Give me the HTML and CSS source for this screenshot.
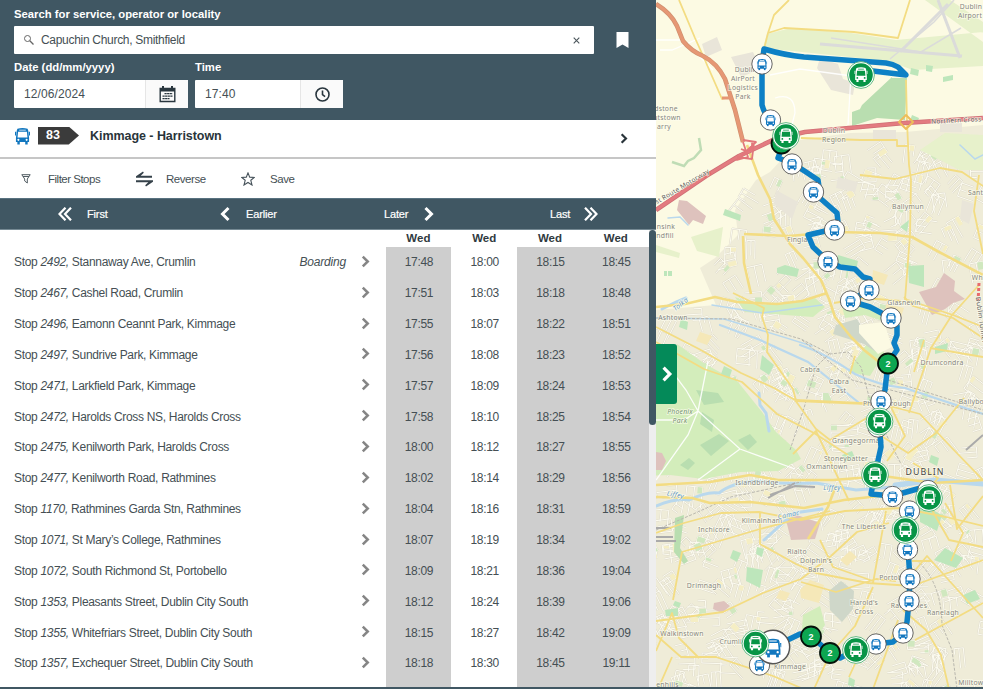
FILE: index.html
```html
<!DOCTYPE html>
<html lang="en">
<head>
<meta charset="utf-8">
<title>Kimmage - Harristown timetable</title>
<link rel="stylesheet" href="styles.css">
</head>
<body>
<svg width="0" height="0" class="defs">
  <symbol id="bus" viewBox="0 0 16 18">
    <path fill="currentColor" fill-rule="evenodd" d="M2.600 1.300Q8-.5 13.400 1.300l.7 1.700.9 8v4.500h-1.500V18h-2.600v-2.500H5.100V18H2.500v-2.500H1V11l.9-8zM4.500 2.200v.9h7v-.9zM3.300 4.500l-.6 6h10.600l-.6-6zM3.600 12a1.100 1.100 0 100 2.200 1.100 1.100 0 000-2.200zm8.800 0a1.100 1.100 0 100 2.200 1.100 1.100 0 000-2.200z"/>
    <path fill="currentColor" d="M0 4.500h1.400L1 8.500H0zM14.600 4.500H16v4h-1z"/>
  </symbol>
  <symbol id="stop" viewBox="-11 -11 22 22"><circle r="10.200" fill="#fff" stroke="#555" stroke-width=".9"/><use href="#bus" x="-5.200" y="-5.500" width="10.400" height="12" color="#1277bf"/></symbol>
  <symbol id="vehicle" viewBox="-15 -15 30 30"><circle r="13.400" fill="#fff" stroke="#3fa968" stroke-width=".8"/><circle r="11.800" fill="#079546"/><use href="#bus" x="-6.700" y="-8" width="13.400" height="15" color="#fff"/></symbol>
  <symbol id="cluster" viewBox="-12 -12 24 24"><circle r="10" fill="#0da651" stroke="#05120a" stroke-width="1.800"/></symbol>
  <symbol id="chev" viewBox="0 0 10 14"><path d="M2 1.500L7.500 7 2 12.500" fill="none" stroke="currentColor" stroke-width="2.800"/></symbol>
</svg>
<main class="app">
  <section class="panel">
    <header class="search">
      <label>Search for service, operator or locality</label>
      <div class="search-row">
        <div class="field query">
          <svg width="12" height="12" viewBox="0 0 12 12" fill="none" stroke="#666"><circle cx="4.500" cy="4.500" r="3"/><path d="M6.800 6.800l3.700 3.700" stroke-width="1.300"/></svg>
          <span>Capuchin Church, Smithfield</span>
          <svg width="7" height="7" viewBox="0 0 7 7" stroke="#4b565c" stroke-width="1.100"><path d="M.7.7l5.600 5.600M6.300.7L.7 6.300"/></svg>
        </div>
        <svg width="13" height="16" viewBox="0 0 13 16"><path fill="#fff" d="M.5 0h12v16l-6-3.400L.5 16z"/></svg>
      </div>
      <div class="when">
        <div class="date"><label>Date (dd/mm/yyyy)</label>
          <div class="field"><span>12/06/2024</span><i><svg width="17" height="17" viewBox="0 0 17 17"><path fill="none" stroke="#29363e" stroke-width="1.400" d="M1.200 2.500h14.600v13H1.200z"/><path fill="#29363e" d="M1 2h15v3.500H1zM3 0h2v3H3zM12 0h2v3h-2z"/><path stroke="#29363e" stroke-width="1.300" stroke-dasharray="2.200 .4" d="M5.500 7.700h8M3.500 10.200h10M3.500 12.700h7"/></svg></i></div></div>
        <div class="time"><label>Time</label>
          <div class="field"><span>17:40</span><i><svg width="15" height="15" viewBox="0 0 15 15" fill="none" stroke="#29363e" stroke-width="1.600"><circle cx="7.500" cy="7.500" r="6.500"/><path d="M7.500 3.500v4.200l2.600 2"/></svg></i></div></div>
      </div>
    </header>
    <div class="route">
      <svg class="route-bus" width="15" height="18"><use href="#bus" width="15" height="18"/></svg>
      <b class="badge">83</b><b class="name">Kimmage - Harristown</b>
      <svg class="go" width="8" height="11"><use href="#chev" width="8" height="11"/></svg>
    </div>
    <div class="tools">
      <svg width="10" height="10" viewBox="0 0 10 10" fill="none" stroke="#525d63" stroke-width="1"><path d="M.8.700h8.400L6.300 5v4L3.700 7V5zM2 2.500h6"/></svg><span>Filter Stops</span>
      <svg width="17" height="16" viewBox="0 0 17 16" fill="#35414a"><path d="M0 6.700V5.300L7 .5l.8 1.300L4.700 4.700H16v2zM17 9.300v1.400l-7 4.800-.8-1.300 3.100-2.900H0v-2z"/></svg><span>Reverse</span>
      <svg width="14" height="14" viewBox="0 0 14 14" fill="none" stroke="#46525a" stroke-width="1.100"><path d="M7 .9l1.700 4.200 4.600.3-3.500 2.900 1.200 4.700L7 10.500 3 13l1.200-4.700L.7 5.400l4.600-.3z"/></svg><span>Save</span>
    </div>
    <nav class="pager">
      <svg width="14" height="14" viewBox="0 0 14 14" class="double"><path d="M7.500.7L1.500 7l6 6.300M13 .7L7 7l6 6.300"/></svg><span>First</span>
      <svg width="10" height="16" viewBox="0 0 10 14" class="single"><path d="M8.500 1L2.500 7l6 6"/></svg><span>Earlier</span>
      <span>Later</span><svg width="10" height="16" viewBox="0 0 10 14" class="single"><path d="M1.500 1l6 6-6 6"/></svg>
      <span>Last</span><svg width="14" height="14" viewBox="0 0 14 14" class="double"><path d="M1 .7L7 7l-6 6.300M6.500.7l6 6.300-6 6.300"/></svg>
    </nav>
    <div class="timetable">
      <div class="table">
        <div class="days"><b>Wed</b><b>Wed</b><b>Wed</b><b>Wed</b></div>
        <div class="rows" id="rows"></div>
      </div>
      <div class="scroll"><div class="thumb"></div></div>
    </div>
  </section>
  <section class="map">
    <svg width="327" height="689" viewBox="656 0 327 689">
      <rect x="656" width="327" height="689" fill="#efecd8"/>
      <path fill="#fcfae3" d="M656 0H983V125L905 132 850 133 800 140 770 172 756 180 735 210 738 235 715 258 700 268 716 305 656 310z"/>
      <g id="streets"></g>
      <g fill="#e7f1cb">
        <path d="M767 34l24-6 60 5 45 7 87-8v34l-70 4-25-9-125-13zM895 0h30l58 42V22L950 0z"/>
        <path d="M691 237l32-10-4 30-22-6zM656 245l24 8-1 5-23-6zM920 150l25-17 38 2v35h-24l-15-8z"/>
      </g>
      <g fill="#d3edbb">
        <path d="M677 344l28 20 33 18 24 30 14 20 20 18 5 9-23 12-38 1-36 7-34-4-24 1v-83l21-5z"/>
        <path d="M735 297l22 8 40-3 18-4 10 9-12 10-28-2-40-3zM840 299l20 4 21 9 4 10-20-7-20 3z"/>
        <path d="M803 615l17-9 5 19-6 8-17-4zM848 372l20-30 12-2 4 13-14 23z"/>
      </g>
      <g fill="#b9deb0">
        <path d="M892 78h15l-2 42-28-2-25 8v-14l14-5 24-2zM862 105l30-28 4 39-40 1z"/>
        <path d="M696 390l22 3 6 9-20 3zM702 412l12 8-2 12-12-8zM700 445l19-11 10 7-18 15zM738 440l12-6 7 8-9 8zM680 465l9-7 6 5-7 7z"/>
        <path d="M675 518l9-3-4 33 8 13-4 3-10-12z"/>
      </g>
      <path fill="none" stroke="#bfdcb5" stroke-width="2.500" d="M699 138l2 12-7 8-6 3-4 5-12-4"/>
      <g fill="#bde6bb">
        <path d="M911 68l8 2-1 6-8-2zM926 65l7 1-1 6-6-1zM943 77l10-2v5l-10 2zM912 115l7 3-2 6-7-3zM725 209l16 6-1 6-17-6zM777 268l8-3 14 4-2 8-20-4zM838 255l20 6-2 9-20-7zM908 266l16-1v22l-15-4zM900 227l9-7-2 12zM664 271h3v5h-3zM668 271h4v5h-4zM681 319l7 3-1 8-8-3zM724 366l8 4-3 9-8-5zM762 355l12 10-5 10-9-6zM747 567l16 3-3 18-14-7zM733 550l8 3-4 9-7-4zM757 547l7 2-2 8-6-3zM665 610l13-2v8h-12zM675 601l6 2-2 5-6-3zM849 677l6 3-1 7-6-2zM920 503l22 12-5 16-17-9zM934 560l11-12 18 10-7 10zM935 347l13-4-1 8-12 3zM842 455l10-4 3 7-10 4zM931 455l8 3-2 8-8-4zM963 595l12-5 5 9-13 5z"/>
      </g>
      <g fill="#f5e8b8"><path d="M800 590l10-10 14 5-5 18-18-5zM886 304l18 4-3 9-16-3zM873 270l15 5-4 10-12-4zM780 590l10 3-4 8-10-3zM840 560l10-9 7 6-10 9zM930 300l14 4-4 10-12-4zM700 332l12 4-5 9-11-4z"/></g>
      <g fill="#dec2bd"><path d="M679 200l8 1 19 15-3 8-10-4-4 5-12-15zM919 292l17-5 8-14 11 8-1 10 11 8-12 4-8 6-13 6zM786 520l8-6 26 9-5 16-24 1zM656 452l6 1 4 8-4 9h-6zM714 603l10-2 6 5-8 7-9-4z"/></g>
      <g fill="#cfd7c9"><path d="M829 591l12-10 13 10-1 18-11 13-12-12zM836 325l21-6 11 18 8 15-12-8-31-10z"/></g>
      <path fill="#fcfae3" d="M859 325l25-3 8 25-14 7-19-21z"/>
      <g fill="#e9e5d9"><path d="M702 44l15-7 5 13-16 7zM731 57l22-5 8 17-20 8zM820 58l18 6 5 15 12 4-2 12-22-5-14-22zM873 130h23v10h-23zM940 123h22v9h-22zM776 190l22 12-6 17-18-15zM838 177l20 5-3 10-19-4zM962 200l12 4-5 20-9-5z"/></g>
      <g fill="none" stroke="#dbdbda" stroke-width="3"><path d="M820 44l142 12M938 0l22 58M900 52l48-48" /><path stroke-width="1.500" d="M831 38l90 14 40-24M890 59l44-37 20-22"/></g>

      <g fill="none" stroke="#b9d8ed" stroke-linecap="round">
        <path stroke-width="3" d="M656 506q20-8 33-6 18-9 30-7 12-10 37-12 24 3 60 2l40 7 37-3 43-7 47 3"/>
        <path stroke-width="5" d="M895 485l40-5 48 4"/><path stroke-width="3" d="M662 309l14-7 10-4M759 393l1 12 6 8 3 18M764 540l30-27 28-4"/>
        <path stroke-width="2.200" d="M800 345q25 8 55 29 25 12 50 14l78 26M720 325l40 15 48 22 50 40"/>
        <path stroke-width="1.500" d="M656 318l68 1q40 12 88 27M960 145l15 14 8-4M668 218l12-1 8 8M712 305l50 8 60-8"/>
      </g>
      <g fill="none" stroke="#fff" stroke-width="1.300" opacity=".9">
        <path d="M656 350l30 40 12 21-10 24-32 45M698 411l42 38 55 20M698 411l10-50M740 449l-42 31M656 420h28l14-9"/>
        <path d="M656 40h27l30 30M660 50h12l28-12M770 75l30-6 52 7M775 98q20-6 20 15l-5 20M851 75l-3 50"/>
      </g>
      <g fill="none" stroke="#b9b7ae" stroke-width="1" stroke-dasharray="3 1.500">
        <path d="M656 318l75 1 70 20 29 15 18-2 13 15 10 37 30 60M790 450l14-42 12-41 15-15M888 380l95 30M802 340l50 40 131 34M656 530l35-15 40-18 70-15M916 560q25 20 26 65l10 25 5 39"/>
      </g>
      <g fill="none" stroke="#aaa" stroke-width="2"><path d="M770 495l25-9 20 1M768 498l27-15M966 450l17-15M656 537h17M656 541h20M656 528h15"/></g>

      <g fill="none" stroke="#f3dc82" stroke-width="1.800" stroke-linejoin="round">
        <path d="M679 0l16 38 9 20 18 41 8-2M789 0l-15 15-6 18-4 16M768 33l16-5 70 4 44 6 12-38M906 80l1 42 2 43 2 15-1 55-5 65"/>
        <path stroke-width="2.600" d="M747 145l11 30 12 24 4 20 16 25 13 14 18 22 8 19 6 18 16 20 13 13 15 12M744 234l45 2 46-4 45 1 32 4 27 15 44 23M743 236l1 27 7 31M656 307l29-3 30-7 22 5 40 2 25-3 25-8"/>
        <path d="M733 293l31 15-2 9 6 18-1 17 26 37 3 12 72 3M656 327l43 22 42 24 33 15 21 12M656 342l48 27 38 13 35 32 37 19 34 22M801 138l60 2h36v6h12M860 175l35 4 45-11 22 4 21 14M979 175l-5 36 9 43M979 285l-27 30-21 33-17 50-5 15M908 300l45 15 30 12"/>
        <path d="M834 303l30-5 37 3M904 297l9 9 40 12 30 20M795 400l87 4 38 10 31 33 32 33M795 400l21 29 14 11 60-36M793 454l23-23 33 70M883 437l25 16 28-20 28-35M890 405l15 31-18 25M930 348l53 9M913 463l25 15-21 25M850 374l5-18M924 340l-10 32"/>
        <path stroke-width="2.600" d="M656 485l54-3 40-7 28 5 55 0 50-4 50 7 50-3M656 497l36 1 18 5 40-1 54 6 40-8 35-4 34-5M836 485l-8 22-20 32"/>
        <path d="M656 533l28-10 37-10 38-1 42 8 44-9 56-3 45 9 37 9M760 512v32l36 20 20 9 52 10 44 3 71-26M673 600l9-48 78-23 70-18M656 621l67-9 40-19 38-14 30-23 26-24 32-9M873 583l13-72M873 587l-18 39-25 28-16 35M656 651l16-38 7 25 20 20M656 635l25 22 35 0 57 19 28 12M672 657l-14 32M801 582l35 10 40-13 20 2M820 540l13 27 40 14M849 677l10-22 18-21M898 620l-25 69M907 580l20-24 18 20 38 42M903 610l23 20 15 25 8 34M932 510l17 30 34 7M945 503l18 30-12 28M912 561h20M950 485l7 44 26-33M915 640l68-37"/>
      </g>
      <g fill="none" stroke-linejoin="round">
        <path stroke="#d0906f" stroke-width="4.600" d="M656 4q15 9 21 22l6 15q8 10 20 15 14 7 22 23l10 31 8 32"/><path stroke="#e69774" stroke-width="3.200" d="M656 4q15 9 21 22l6 15q8 10 20 15 14 7 22 23l10 31 8 32M722 98l8 0"/>
        <path stroke="#cf6f75" stroke-width="4.600" d="M656 210l50-34 33-20 36-17 30-7 55-5 44-4 79-5"/><path stroke="#e37b80" stroke-width="3.200" d="M656 210l50-34 33-20 36-17 30-7 55-5 44-4 79-5"/>
        <path stroke="#e2777b" stroke-width="1.800" d="M743 142l5 15-11 3 19-18-13-2m-2 9q12 6 11-7m-15 15l15 2 2-16"/>
        <path stroke="#edbd5a" stroke-width="2" d="M899 122l7-7 7 7-7 7z"/><path stroke="#e86a6b" stroke-width="3" stroke-dasharray="3 2" d="M979 283l-1 20M704 177l8-5"/>
      </g>

      <g class="labels">
        <text x="746" y="72">Dublin</text><text x="743" y="81">AirPort</text><text x="743" y="90">Logistics</text><text x="743" y="99">Park</text><text x="971" y="9">Dublin</text><text x="970" y="18">Airport</text>
        <text x="666" y="111">dstone</text><text x="667" y="120">utstown</text><text x="664" y="129">arry</text><text x="834" y="133">Dublin</text><text x="834" y="142">Region</text><text x="908" y="209">Ballymun</text><text x="799" y="242">Finglas</text><text x="979" y="195">Santry</text><text x="666" y="229">nsink</text><text x="665" y="238">ndfill</text><text x="673" y="320">Ashtown</text><text x="904" y="305">Glasnevin</text><text x="984" y="280">Whiteh</text>
        <text x="810" y="372">Cabra</text><text x="839" y="384">Cabra</text><text x="839" y="392.500">East</text><text x="942" y="365">Drumcondra</text><text x="887" y="406">Phibsborough</text><text x="978" y="404">Ballybough</text><g class="park"><text x="680" y="414">Phoenix</text><text x="680" y="422.500">Park</text></g><text x="858" y="443">Grangegorman</text><text x="846" y="461">Stoneybatter</text><text x="827" y="468.500">Oxmantown</text><text x="757" y="485">Islandbridge</text><text x="714" y="532">Inchicore</text><text x="762" y="523">Kilmainham</text><text x="864" y="529">The Liberties</text><text x="797" y="554">Rialto</text><text x="816" y="563">Dolphin's</text><text x="816" y="571.500">Barn</text><text x="704" y="588">Drimnagh</text><text x="897" y="580">Portobello</text><text x="864" y="605">Harold's</text><text x="864" y="613.500">Cross</text><text x="909" y="608">Rathmines</text><text x="943" y="615">Ranelagh</text><text x="682" y="636">Walkinstown</text><text x="733" y="644">Crumlin</text><text x="790" y="669">Kimmage</text><text x="664" y="687">reenhills</text><text x="973" y="685">Milltown</text>
        <g class="water"><text x="832" y="490">Liffey</text><text transform="translate(675 497) rotate(12)">Liffey</text><text transform="translate(789 517) rotate(-12)">Camac</text><text transform="translate(682 306) rotate(-38)">Tolka</text></g>
        <g class="road"><text transform="translate(967 122) rotate(-3)">Northern Cross Route</text><text transform="translate(679 191) rotate(-31)">West Route Motorway</text><text transform="translate(979 320) rotate(82)">Dublin Tunnel</text></g>
        <text class="city" x="925" y="475">DUBLIN</text>
      </g>
      <path class="line" d="M861 73l12-2 33 4-8-8q-5-3-12-4l-82-6q-20-2-40-8l-2 15v41q2 8 8 15l16 17-8 21 14 5 14 9 12 8 1 7-6 5 24 21 1 9-4 7-26 6 5 12 15 14 12 6 15 2 8 8 7 2-1 11-19 11 20 6 21 11 6 8v9l-3 8 3 7-9 13-3 27-4 10-2 21 2 26-4 18-2 9-4 20 21 2 36-10 1 12-20 13-4 19 3 19 2 30-1 22-2 21-4 11-10 9-17 2-21 6-15 8-10-5-19-17-11-2-27 13-14 18"/>
      <g id="markers"></g>
    </svg>
    <button class="handle" aria-label="Expand"><svg width="12" height="16"><use href="#chev" width="12" height="16"/></svg></button>
  </section>
</main>
<div class="footer"></div>
<script src="script.js"></script>
</body>
</html>
```
FILE: styles.css
```css
* { box-sizing: border-box; }
body { margin: 0; width: 983px; height: 689px; overflow: hidden; font: 12px "Liberation Sans", Arial, sans-serif; color: #454f54; background: #fff; }
svg { display: block; flex: none; }
.defs { position: absolute; }
.app { display: grid; grid-template-columns: 656px 327px; height: 687px; overflow: hidden; }
.footer { height: 2px; background: #405763; }
.panel { display: grid; grid-template-rows: 120px 39px 39px 32px 457px; }
.search { background: #405763; padding: 7px 14px 0; }
.search label { display: block; height: 19px; line-height: 14px; font-weight: bold; font-size: 11.3px; color: #fff; white-space: nowrap; }
.search-row { display: flex; align-items: center; gap: 22px; }
.field { height: 28px; background: #fff; border-radius: 1px; display: flex; align-items: center; }
.query { width: 580px; padding: 0 14px 0 9px; }
.query span { flex: 1; padding-left: 6px; letter-spacing: -.3px; }
.when { display: flex; gap: 7px; padding-top: 6px; }
.when label { height: 20px; }
.date { width: 174px; }
.time { width: 148px; }
.when .field span { flex: 1; padding-left: 10px; letter-spacing: .1px; }
.field i { width: 43px; height: 28px; background: #fafafa; border-left: 1px solid #e6e6e6; display: grid; place-items: center; }
.route { display: flex; align-items: center; padding: 0 28px 6px 15px; border-bottom: 2px solid #c6c6c6; }
.route-bus { color: #1277bf; }
.badge { width: 41px; height: 18px; margin-left: 8px; padding-left: 8px; background: #3b3b3b; color: #fff; font-size: 12.500px; line-height: 17px; clip-path: polygon(0 0, 75% 0, 100% 50%, 75% 100%, 0 100%); }
.name { margin-left: 11px; font-size: 12.500px; letter-spacing: -.05px; color: #29343a; flex: 1; }
.go { color: #29343a; position: relative; top: 3px; }
.tools { display: grid; grid-template-columns: 27px 88px 30px 75px 29px 1fr; align-items: center; padding-left: 21px; font-size: 11.500px; letter-spacing: -.5px; }
.tools span:nth-of-type(n+2) { letter-spacing: -.45px; }
.pager { display: grid; grid-template-columns: 29px 133px 26px 138px 40px 126px 34px 1fr; align-items: center; padding-left: 58px; background: #405763; border-top: 1px solid #587280; border-bottom: 1px solid #768a94; color: #fff; font-size: 11px; letter-spacing: -.15px; -webkit-text-stroke: .2px #fff; }
.double, .single { fill: none; stroke: #fff; }
.double { stroke-width: 2.200; }
.single { stroke-width: 3; }
.timetable { display: flex; }
.table { width: 649px; }
.days { display: grid; grid-template-columns: repeat(4, 65.800px); padding-left: 385.500px; height: 17px; line-height: 16px; font-size: 11.500px; text-align: center; color: #303a40; }
.rows { height: 440px; background: linear-gradient(90deg, #fff 386px, #cecece 386px, #cecece 451px, #fff 451px, #fff 517px, #cecece 517px); letter-spacing: -.32px; }
.row { display: grid; grid-template-columns: 270px 76px 40px repeat(4, 65.800px); height: 30.850px; align-items: center; text-align: center; }
.stop { padding-left: 14px; text-align: left; white-space: nowrap; }
.boarding { text-align: right; font-style: italic; letter-spacing: -.2px; }
.row svg { margin-left: 15px; color: #858585; position: relative; top: -1px; }
.scroll { width: 7px; background: #eee; }
.thumb { height: 195px; border-radius: 4px; background: #405763; }
.map { position: relative; }
.handle { position: absolute; left: 0; top: 344px; width: 21px; height: 60px; border: 0; padding: 0 0 0 5px; background: #048a59; color: #fff; border-radius: 0 3px 3px 0; }
.line { fill: none; stroke: #0d80c5; stroke-width: 5.500; stroke-linejoin: round; stroke-linecap: round; }
.labels { font: 6.800px "Noto Sans", sans-serif; letter-spacing: .25px; fill: #85847e; text-anchor: middle; paint-order: stroke; stroke: rgba(255,255,240,.7); stroke-width: 1.500px; }
.park { font-style: italic; fill: #719170; }
.water { font-style: italic; fill: #6598c5; }
.road { font-size: 6.500px; fill: #5c5c5c; }
.city { font-size: 8.800px; letter-spacing: 1px; fill: #444; }
.count { font: bold 9px "Liberation Sans", sans-serif; fill: #fff; text-anchor: middle; }
```
FILE: script.js
```javascript
const trips = [
  ["2492", "Stannaway Ave, Crumlin", "17:48 18:00 18:15 18:45"],
  ["2467", "Cashel Road, Crumlin", "17:51 18:03 18:18 18:48"],
  ["2496", "Eamonn Ceannt Park, Kimmage", "17:55 18:07 18:22 18:51"],
  ["2497", "Sundrive Park, Kimmage", "17:56 18:08 18:23 18:52"],
  ["2471", "Larkfield Park, Kimmage", "17:57 18:09 18:24 18:53"],
  ["2472", "Harolds Cross NS, Harolds Cross", "17:58 18:10 18:25 18:54"],
  ["2475", "Kenilworth Park, Harolds Cross", "18:00 18:12 18:27 18:55"],
  ["2477", "Kenilworth Road, Rathmines", "18:02 18:14 18:29 18:56"],
  ["1170", "Rathmines Garda Stn, Rathmines", "18:04 18:16 18:31 18:59"],
  ["1071", "St Mary’s College, Rathmines", "18:07 18:19 18:34 19:02"],
  ["1072", "South Richmond St, Portobello", "18:09 18:21 18:36 19:04"],
  ["1353", "Pleasants Street, Dublin City South", "18:12 18:24 18:39 19:06"],
  ["1355", "Whitefriars Street, Dublin City South", "18:15 18:27 18:42 19:09"],
  ["1357", "Exchequer Street, Dublin City South", "18:18 18:30 18:45 19:11"]
];
document.getElementById("rows").innerHTML = trips.map(([id, name, times], i) =>
  `<div class="row"><span class="stop">Stop <em>${id},</em> ${name}</span><span class="boarding">${i ? "" : "Boarding"}</span><svg width="9" height="13"><use href="#chev" width="9" height="13"/></svg>${times.split(" ").map(t => `<span>${t}</span>`).join("")}</div>`).join("");

// Minor residential streets and small parks, built from a fixed seed so the map is stable.
let seed = 83;
const rnd = () => (seed = (seed * 16807) % 2147483647) / 2147483647;
let casing = "", parks = "", plots = "";
for (let i = 0; i < 620; i++) {
  const x = 656 + rnd() * 327, y = 140 + rnd() * 549;
  if ((x < 728 && y < 312) || (x + y < 915)) continue;
  const a = rnd() * 3.14, c = Math.cos(a), s = Math.sin(a), gap = 4 + rnd() * 4;
  for (let k = 0; k < 3; k++) {
    const len = 6 + rnd() * 15;
    casing += `M${(x - s * gap * k).toFixed(1)} ${(y + c * gap * k).toFixed(1)}l${(c * len).toFixed(1)} ${(s * len).toFixed(1)}`;
  }
  casing += `M${x.toFixed(1)} ${y.toFixed(1)}l${(-s * gap * 2).toFixed(1)} ${(c * gap * 2).toFixed(1)}`;
  if (i % 3 === 0) {
    const w = 3 + rnd() * 6, h = 2 + rnd() * 5;
    const plot = `M${x} ${y}l${c * w} ${s * w}l${-s * h} ${c * h}l${-c * w} ${-s * w}z`;
    if (i % 2) parks += plot; else plots += plot;
  }
}
document.getElementById("streets").innerHTML =
  `<path d="${casing}" fill="none" stroke="#dedacb" stroke-width="1.9"/><path d="${casing}" fill="none" stroke="#fdfcf1" stroke-width="1"/><path d="${parks}" fill="#d0e8bf"/><path d="${plots}" fill="#f5eec4"/>`;

const place = (kind, size, points) => points.map(([x, y]) =>
  `<use href="#${kind}" x="${x - size / 2}" y="${y - size / 2}" width="${size}" height="${size}"/>`).join("");
const clusters = [[888, 363.5], [811, 636.5], [830, 653]];
document.getElementById("markers").innerHTML =
  place("stop", 22, [[762, 64], [770.5, 120], [792, 164], [813.5, 192], [834.500, 230], [828, 261.5], [869, 290], [850.5, 301], [891, 318], [881, 401], [878, 427], [892.5, 496.5], [928, 490.5], [909.5, 511], [907.5, 549.5], [910, 579], [909, 601], [903, 633], [876, 644], [759.5, 665]]) +
  place("stop", 36, [[773, 647]]) +
  place("cluster", 24, [[781.5, 143.5], ...clusters]) +
  clusters.map(([x, y]) => `<text class="count" x="${x}" y="${y + 3}">2</text>`).join("") +
  place("vehicle", 30, [[861, 75], [786, 136], [879.5, 421.5], [875, 475], [929, 498], [905.5, 530], [856, 650], [755.5, 643.5]]);
```
